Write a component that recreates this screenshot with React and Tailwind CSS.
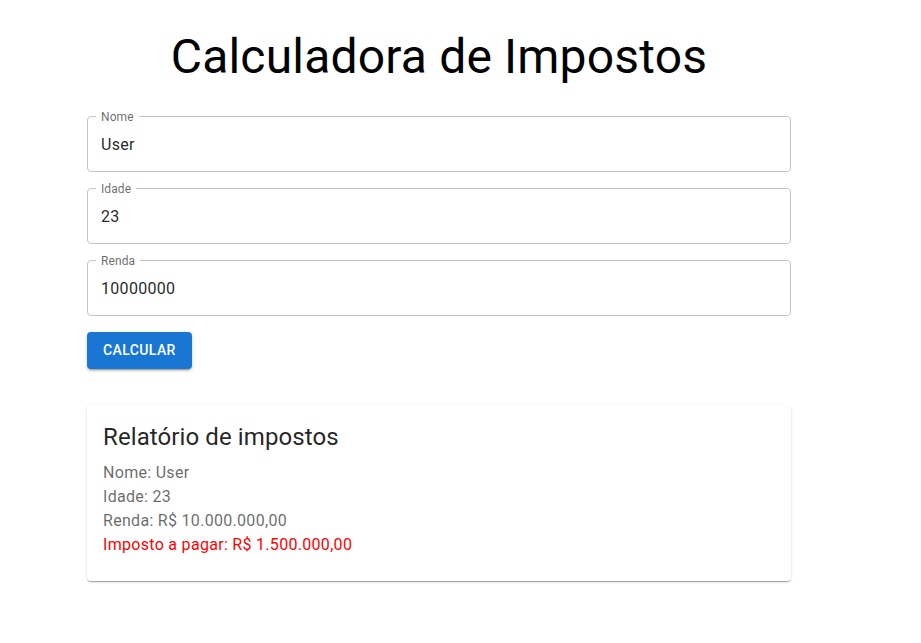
import React from 'react';

const fields = [
  { label: 'Nome', value: 'User' },
  { label: 'Idade', value: '23' },
  { label: 'Renda', value: '10000000' },
];

const OutlinedField = ({ label, value }) => (
  <div className="relative h-14 rounded border border-[#c4c4c4] bg-white">
    <label className="absolute left-[8px] top-0 -translate-y-1/2 bg-white px-[5px] text-xs leading-none tracking-[0.1px] text-[rgba(0,0,0,0.6)]">
      {label}
    </label>
    <input
      readOnly
      value={value}
      className="h-full w-full bg-transparent pl-[13px] pr-[13px] text-base tracking-[0.3px] text-[rgba(0,0,0,0.87)] outline-none"
    />
  </div>
);

export default function App() {
  return (
    <div className="min-h-[643px] bg-white font-['Roboto',sans-serif]">
      <div className="ml-[87px] w-[704px] pt-[29px]">
        <h1 className="text-center text-[48px] font-normal leading-[56px] tracking-[0.18px] text-black">
          Calculadora de Impostos
        </h1>

        {/* Form */}
        <div className="mt-[31px] flex flex-col gap-4">
          {fields.map((f) => (
            <OutlinedField key={f.label} label={f.label} value={f.value} />
          ))}
        </div>

        <button className="mt-4 h-[36.5px] rounded bg-[#1976d2] px-4 text-sm font-medium uppercase tracking-[0.4px] text-white shadow-[0px_3px_1px_-2px_rgba(0,0,0,0.2),0px_2px_2px_0px_rgba(0,0,0,0.14),0px_1px_5px_0px_rgba(0,0,0,0.12)]">
          Calcular
        </button>

        {/* Report */}
        <div className="mt-[36px] rounded bg-white px-4 pt-4 pb-6 shadow-[0px_2px_1px_-1px_rgba(0,0,0,0.2),0px_1px_1px_0px_rgba(0,0,0,0.14),0px_1px_3px_0px_rgba(0,0,0,0.12)]">
          <h5 className="mb-[8px] text-2xl leading-8 tracking-[0.1px] text-[rgba(0,0,0,0.87)]">Relatório de impostos</h5>
          <div className="text-base leading-6 tracking-[0.3px]">
            <p className="text-[rgba(0,0,0,0.6)]">Nome: User</p>
            <p className="text-[rgba(0,0,0,0.6)]">Idade: 23</p>
            <p className="text-[rgba(0,0,0,0.6)]">Renda: R$ 10.000.000,00</p>
            <p className="text-[#ff0000]">Imposto a pagar: R$ 1.500.000,00</p>
          </div>
        </div>
      </div>
    </div>
  );
}
